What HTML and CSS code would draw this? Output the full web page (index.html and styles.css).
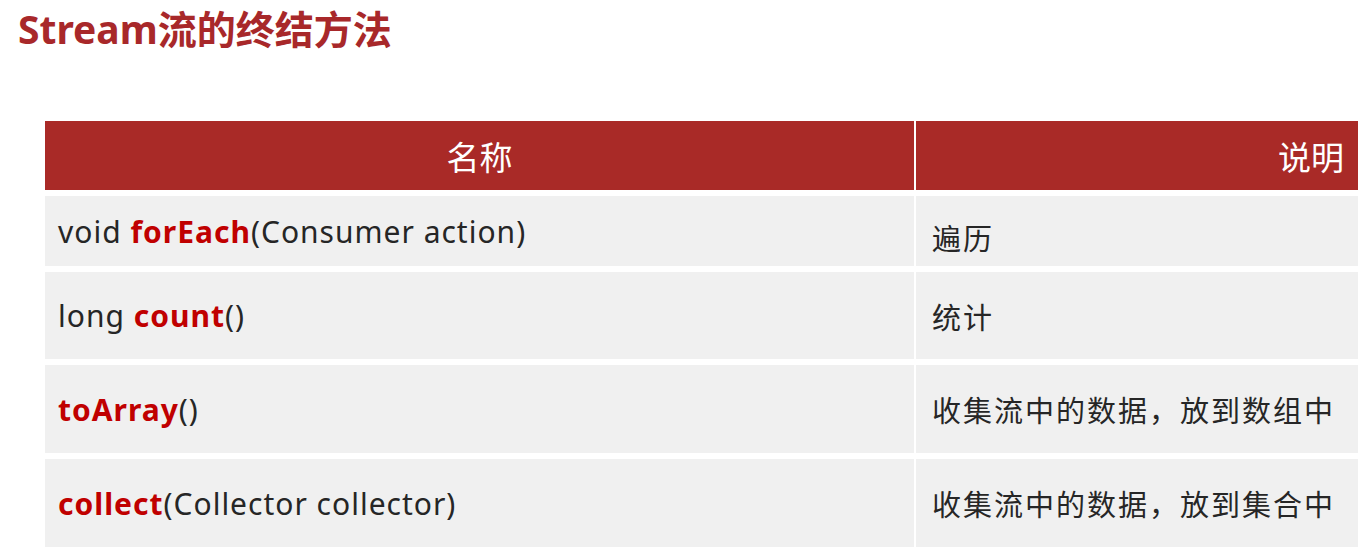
FILE: index.html
```html
<!DOCTYPE html>
<html lang="zh-CN">
<head>
<meta charset="utf-8">
<title>Stream流的终结方法</title>
<link rel="stylesheet" href="styles.css">
</head>
<body>
<h1 class="title">Stream流的终结方法</h1>
<div class="table">
  <div class="cell head name"><span>名称</span></div>
  <div class="cell head desc"><span>说明</span></div>

  <div class="cell code"><span>void <b class="kw">forEach</b>(Consumer action)</span></div>
  <div class="cell text shift"><span>遍历</span></div>

  <div class="cell code"><span>long <b class="kw">count</b>()</span></div>
  <div class="cell text"><span>统计</span></div>

  <div class="cell code"><span><b class="kw">toArray</b>()</span></div>
  <div class="cell text"><span>收集流中的数据，放到数组中</span></div>

  <div class="cell code"><span><b class="kw">collect</b>(Collector collector)</span></div>
  <div class="cell text"><span>收集流中的数据，放到集合中</span></div>
</div>
</body>
</html>
```

FILE: styles.css
```css
html, body {
  margin: 0;
  padding: 0;
  background: #ffffff;
  overflow: hidden;
  width: 1358px;
  height: 552px;
}
body {
  font-family: "Noto Sans", "Noto Sans CJK SC", sans-serif;
  color: #262626;
}
.title {
  margin: 0;
  padding: 5px 0 0 18px;
  height: 115px;
  box-sizing: border-box;
  font-size: 39px;
  line-height: 48px;
  font-weight: 700;
  color: #a8282a;
}
.table {
  margin-left: 45px;
  margin-top: 6px;
  display: grid;
  grid-template-columns: 869px 790px;
  grid-template-rows: 69px 70px 87px 88px 88px;
  column-gap: 2px;
  row-gap: 6px;
  width: 1661px;
}
.cell {
  background: #f0f0f0;
  display: flex;
  align-items: center;
  font-size: 28px;
}
.head {
  background: #a92a27;
  color: #ffffff;
  justify-content: center;
  font-size: 33px;
}
.code {
  padding-left: 13px;
  font-size: 30px;
  letter-spacing: 1px;
}
.text {
  padding-left: 16px;
  font-size: 29px;
  letter-spacing: 2px;
  font-family: "Noto Sans CJK SC", sans-serif;
}
.shift {
  padding-top: 12px;
}
.kw {
  color: #c00000;
  font-weight: 700;
}
```
